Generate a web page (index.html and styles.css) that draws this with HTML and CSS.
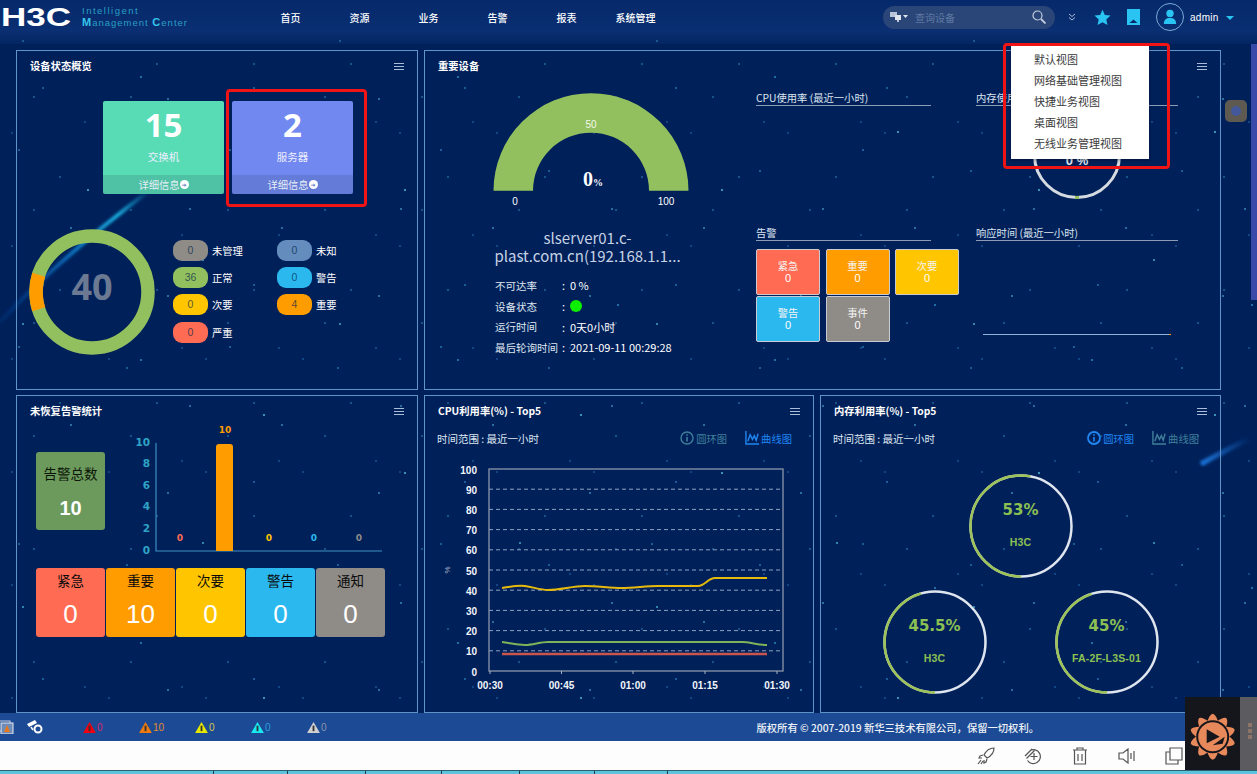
FILE: index.html
```html
<!DOCTYPE html>
<html lang="zh-CN">
<head>
<meta charset="utf-8">
<title>H3C Intelligent Management Center</title>
<link rel="stylesheet" href="styles.css">
</head>
<body>
<div class="page">
  <svg class="backdrop" viewBox="0 0 1257 774" aria-hidden="true">
    <defs>
      <linearGradient id="cometA" x1="0" y1="1" x2="1" y2="0"><stop offset="0" stop-color="#0a4fa8" stop-opacity=".2"/><stop offset=".5" stop-color="#0b78c8"/><stop offset=".8" stop-color="#18b8e8"/><stop offset="1" stop-color="#18b8e8" stop-opacity="0"/></linearGradient>
      <linearGradient id="cometB" x1="0" y1="1" x2="1" y2="0"><stop offset="0" stop-color="#1a78e0"/><stop offset="1" stop-color="#1a78e0" stop-opacity="0"/></linearGradient>
      <filter id="soft"><feGaussianBlur stdDeviation="1.4"/></filter>
    </defs>
    <path d="M0 322 Q55 262 150 190" fill="none" stroke="url(#cometA)" stroke-width="3.5" filter="url(#soft)"/>
    <path d="M1201 464 Q1222 452 1250 438" fill="none" stroke="url(#cometB)" stroke-width="5" filter="url(#soft)"/>
  </svg>

  <header class="topbar">
    <div class="brand">
      <svg class="logo" viewBox="0 0 72 20" aria-label="H3C"><text x="1" y="18" textLength="70" lengthAdjust="spacingAndGlyphs">H3C</text></svg>
      <div class="brand-name"><div>Intelligent</div><div><b>M</b>anagement <b>C</b>enter</div></div>
    </div>
    <nav class="nav">
      <a>首页</a><a>资源</a><a>业务</a><a>告警</a><a>报表</a><a>系统管理</a>
    </nav>
    <div class="search">
      <svg class="search-type" viewBox="0 0 18 12"><rect x="0" y="1" width="7" height="5" fill="#b8c4d8"/><rect x="5" y="4" width="6" height="5" fill="#dfe5ee"/><rect x="7" y="9" width="2" height="2" fill="#b8c4d8"/><path d="M13 4h5l-2.500 3z" fill="#dfe5ee"/></svg>
      <span class="search-text">查询设备</span>
      <svg class="search-icon" viewBox="0 0 14 14"><circle cx="5.500" cy="5.500" r="4.500" fill="none" stroke="#c4cfdf" stroke-width="1.200"/><path d="M9 9l4.500 4.500" stroke="#c4cfdf" stroke-width="1.800"/></svg>
    </div>
    <svg class="chev" viewBox="0 0 8 8"><path d="M1 1l3 2.500L7 1M1 4.500l3 2.500 3-2.500" fill="none" stroke="#a9bcd8" stroke-width="1"/></svg>
    <svg class="star" viewBox="0 0 18 18"><path d="M9 .8l2.500 5.600 6 .6-4.500 4 1.300 6L9 13.900 3.700 17l1.300-6-4.500-4 6-.6z" fill="#2ac4f2"/></svg>
    <svg class="mark" viewBox="0 0 13 16"><path d="M0 0h13v16H0z" fill="#2ac4f2"/><path d="M2.500 14L6.500 10.500 10.500 14z" fill="#06296b"/></svg>
    <div class="avatar"><svg viewBox="0 0 16 18"><circle cx="8" cy="5" r="4.200" fill="#2ac4f2"/><path d="M1 17c0-5 2.500-7 7-7s7 2 7 7z" fill="#2ac4f2"/></svg></div>
    <span class="user">admin</span>
    <span class="caret"></span>
  </header>

  <main class="board">
    <section class="panel">
      <div class="panel-head"><h2>设备状态概览</h2><span class="menu-icon"></span></div>
      <div class="cards">
        <div class="card card-green"><strong>15</strong><span class="card-label">交换机</span><span class="card-foot">详细信息<i class="go">➔</i></span></div>
        <div class="card card-blue"><strong>2</strong><span class="card-label">服务器</span><span class="card-foot">详细信息<i class="go">➔</i></span></div>
      </div>
      <div class="status">
        <div class="ring">
          <svg viewBox="0 0 126 126"><circle cx="63" cy="63" r="56" fill="none" stroke="#93c05e" stroke-width="13.500"/><circle cx="63" cy="63" r="56" fill="none" stroke="#ff9c00" stroke-width="13.500" pathLength="100" stroke-dasharray="10 90" stroke-dashoffset="55"/></svg>
          <span>40</span>
        </div>
        <ul class="legend">
          <li><b class="pill c-gray">0</b>未管理</li>
          <li><b class="pill c-steel">0</b>未知</li>
          <li><b class="pill c-green">36</b>正常</li>
          <li><b class="pill c-sky">0</b>警告</li>
          <li><b class="pill c-yellow">0</b>次要</li>
          <li><b class="pill c-orange">4</b>重要</li>
          <li><b class="pill c-red">0</b>严重</li>
        </ul>
      </div>
    </section>

    <section class="panel panel-wide">
      <div class="panel-head"><h2>重要设备</h2><span class="menu-icon"></span></div>
      <div class="device">
        <div class="device-left">
          <svg class="gauge" viewBox="0 0 200 118">
            <path d="M2.500 97.700a97.500 97.500 0 0 1 195 0h-39.500a58 58 0 0 0-116 0z" fill="#93c05e"/>
            <text x="100" y="35" class="g-mid">50</text>
            <text x="102" y="93" class="g-val">0<tspan class="g-pct">%</tspan></text>
            <text x="24" y="112" class="g-end">0</text>
            <text x="175" y="112" class="g-end">100</text>
          </svg>
          <div class="device-name"><span>slserver01.c-</span><span>plast.com.cn(192.168.1.1...</span></div>
          <dl class="facts">
            <div><dt>不可达率</dt><dd>:&nbsp; 0 %</dd></div>
            <div><dt>设备状态</dt><dd>:&nbsp; <i class="dot"></i></dd></div>
            <div><dt>运行时间</dt><dd>:&nbsp; 0天0小时</dd></div>
            <div><dt>最后轮询时间</dt><dd>:&nbsp; 2021-09-11 00:29:28</dd></div>
          </dl>
        </div>
        <div class="device-right">
          <div class="block"><h3>CPU使用率 (最近一小时)</h3></div>
          <div class="block">
            <h3>内存使用率 (最近一小时)</h3>
            <div class="mem-ring">
              <svg viewBox="0 0 88 88"><circle cx="44" cy="44" r="42.500" fill="none" stroke="#d6dbe2" stroke-width="3"/><path d="M42 86.500h4" stroke="#93c05e" stroke-width="3"/></svg>
              <span>0 %</span>
            </div>
          </div>
          <div class="block">
            <h3>告警</h3>
            <div class="alarm-grid">
              <div class="alarm c-red"><span>紧急</span><span>0</span></div>
              <div class="alarm c-orange"><span>重要</span><span>0</span></div>
              <div class="alarm c-yellow"><span>次要</span><span>0</span></div>
              <div class="alarm c-sky"><span>警告</span><span>0</span></div>
              <div class="alarm c-gray"><span>事件</span><span>0</span></div>
            </div>
          </div>
          <div class="block">
            <h3>响应时间 (最近一小时)</h3>
            <div class="resp-line"></div>
          </div>
        </div>
      </div>
    </section>

    <section class="panel">
      <div class="panel-head"><h2>未恢复告警统计</h2><span class="menu-icon"></span></div>
      <div class="alarm-top">
        <div class="total"><span>告警总数</span><strong>10</strong></div>
        <svg class="bars" viewBox="0 0 260 130">
          <g class="y-labels">
            <text x="20" y="20">10</text><text x="20" y="41">8</text><text x="20" y="63">6</text><text x="20" y="84">4</text><text x="20" y="106">2</text><text x="20" y="128">0</text>
          </g>
          <path d="M26 17V125H252" fill="none" stroke="#3d8fc0" stroke-width="1.200"/>
          <path d="M86 125V21a3 3 0 0 1 3-3h11a3 3 0 0 1 3 3v104z" fill="#ff9c00"/>
          <g class="bar-labels">
            <text x="50" y="115" fill="#ff6c53">0</text>
            <text x="95" y="7" fill="#ff9c00">10</text>
            <text x="139" y="115" fill="#ffc600">0</text>
            <text x="184" y="115" fill="#2bb8ee">0</text>
            <text x="229" y="115" fill="#8f8c88">0</text>
          </g>
        </svg>
      </div>
      <div class="tiles">
        <div class="tile c-red"><span>紧急</span><strong>0</strong></div>
        <div class="tile c-orange"><span>重要</span><strong>10</strong></div>
        <div class="tile c-yellow"><span>次要</span><strong>0</strong></div>
        <div class="tile c-sky"><span>警告</span><strong>0</strong></div>
        <div class="tile c-gray"><span>通知</span><strong>0</strong></div>
      </div>
    </section>

    <section class="panel">
      <div class="panel-head"><h2>CPU利用率(%) - Top5</h2><span class="menu-icon"></span></div>
      <div class="toolbar">
        <span>时间范围 : 最近一小时</span>
        <div class="toggles">
          <span class="toggle"><svg viewBox="0 0 14 14"><circle cx="7" cy="7" r="6" fill="none" stroke="currentColor" stroke-width="1.400"/><path d="M7 6v4.500M7 3.200v1.500" stroke="currentColor" stroke-width="1.600"/></svg>圆环图</span>
          <span class="toggle is-on"><svg viewBox="0 0 15 15"><path d="M1 0v14h14" fill="none" stroke="currentColor" stroke-width="1.500"/><path d="M3 11l2.500-7 2.500 5 2-4 2 5 2-7" fill="none" stroke="currentColor" stroke-width="1.500"/></svg>曲线图</span>
        </div>
      </div>
      <svg class="cpu" viewBox="0 0 388 250">
        <g class="grid-lines">
          <path d="M64 39.200h294M64 59.400h294M64 79.600h294M64 99.800h294M64 120h294M64 140.200h294M64 160.400h294M64 180.600h294M64 200.800h294"/>
        </g>
        <rect x="64" y="19" width="294" height="202" fill="none" stroke="#8c96aa" stroke-width="1.300"/>
        <path d="M65 221v3M136.500 221v3M208 221v3M280 221v3M352 221v3" stroke="#a8b2c4"/>
        <g class="cpu-y">
          <text x="52" y="24">100</text><text x="52" y="44">90</text><text x="52" y="64">80</text><text x="52" y="84">70</text><text x="52" y="104">60</text><text x="52" y="125">50</text><text x="52" y="145">40</text><text x="52" y="165">30</text><text x="52" y="185">20</text><text x="52" y="205">10</text><text x="52" y="226">0</text>
        </g>
        <g class="cpu-x">
          <text x="65" y="239">00:30</text><text x="136.500" y="239">00:45</text><text x="208" y="239">01:00</text><text x="280" y="239">01:15</text><text x="352" y="239">01:30</text>
        </g>
        <text class="cpu-unit" transform="translate(25 120) rotate(-90)">%</text>
        <path d="M77 138C85 137 92 135 100 136C108 137 115 140 123 140C136 140 147 136 160 136C172 136 185 138 197 138C209 138 221 136 233 136L273 136C280 136 283 128 290 128L342 128" fill="none" stroke="#e6ba0c" stroke-width="2"/>
        <path d="M77 192C85 193 92 195 100 195C108 195 115 192 123 192L317 192C325 192 333 195 342 195" fill="none" stroke="#7fb35a" stroke-width="2"/>
        <path d="M77 204H342" stroke="#c8564f" stroke-width="2.500"/>
      </svg>
    </section>

    <section class="panel">
      <div class="panel-head"><h2>内存利用率(%) - Top5</h2><span class="menu-icon"></span></div>
      <div class="toolbar">
        <span>时间范围 : 最近一小时</span>
        <div class="toggles">
          <span class="toggle is-on"><svg viewBox="0 0 14 14"><circle cx="7" cy="7" r="6" fill="none" stroke="currentColor" stroke-width="1.800"/><path d="M7 6v4.500M7 3.200v1.500" stroke="currentColor" stroke-width="1.600"/></svg>圆环图</span>
          <span class="toggle"><svg viewBox="0 0 15 15"><path d="M1 0v14h14" fill="none" stroke="currentColor" stroke-width="1.500"/><path d="M3 11l2.500-7 2.500 5 2-4 2 5 2-7" fill="none" stroke="currentColor" stroke-width="1.500"/></svg>曲线图</span>
        </div>
      </div>
      <div class="donuts">
        <div class="donut-row">
          <div class="donut"><svg viewBox="0 0 104 104"><circle class="d-bg" cx="52" cy="52" r="50.500"/><circle class="d-fg" cx="52" cy="52" r="50.500" pathLength="100" stroke-dasharray="53 47"/></svg><strong>53%</strong><span>H3C</span></div>
        </div>
        <div class="donut-row donut-row-wide">
          <div class="donut"><svg viewBox="0 0 104 104"><circle class="d-bg" cx="52" cy="52" r="50.500"/><circle class="d-fg" cx="52" cy="52" r="50.500" pathLength="100" stroke-dasharray="45.500 54.500"/></svg><strong>45.5%</strong><span>H3C</span></div>
          <div class="donut"><svg viewBox="0 0 104 104"><circle class="d-bg" cx="52" cy="52" r="50.500"/><circle class="d-fg" cx="52" cy="52" r="50.500" pathLength="100" stroke-dasharray="45 55"/></svg><strong>45%</strong><span>FA-2F-L3S-01</span></div>
        </div>
      </div>
    </section>
  </main>

  <footer class="statusbar">
    <svg class="sb-stack" viewBox="0 0 14 14"><rect x="-2" y="1" width="12" height="10" fill="none" stroke="#c9d4e6"/><rect x="1" y="3" width="12" height="11" fill="#6f8cb8" stroke="#e4e9f2"/><path d="M7 5l3 7H4z" fill="#e9781c"/></svg>
    <svg class="sb-cam" viewBox="0 0 16 14"><path d="M0 4l8-4 2 3-8 4z" fill="#fff"/><circle cx="11" cy="9" r="3.500" fill="none" stroke="#fff" stroke-width="2"/><path d="M4 7l2 3" stroke="#fff" stroke-width="1.500"/></svg>
    <div class="sb-alarms">
      <span class="sb-alarm a-red"><svg viewBox="0 0 14 12"><path d="M7 0l7 12H0z" fill="currentColor"/><path d="M7 4v6" stroke="#333" stroke-width="2"/></svg>0</span>
      <span class="sb-alarm a-orange"><svg viewBox="0 0 14 12"><path d="M7 0l7 12H0z" fill="currentColor"/><path d="M7 4v6" stroke="#333" stroke-width="2"/></svg>10</span>
      <span class="sb-alarm a-yellow"><svg viewBox="0 0 14 12"><path d="M7 0l7 12H0z" fill="currentColor"/><path d="M7 4v6" stroke="#333" stroke-width="2"/></svg>0</span>
      <span class="sb-alarm a-cyan"><svg viewBox="0 0 14 12"><path d="M7 0l7 12H0z" fill="currentColor"/><path d="M7 4v6" stroke="#333" stroke-width="2"/></svg>0</span>
      <span class="sb-alarm a-gray"><svg viewBox="0 0 14 12"><path d="M7 0l7 12H0z" fill="currentColor"/><path d="M7 4v6" stroke="#333" stroke-width="2"/></svg>0</span>
    </div>
    <span class="copyright">版权所有 © 2007-2019 新华三技术有限公司，保留一切权利。</span>
  </footer>

  <div class="toolstrip">
    <svg viewBox="0 0 18 18"><path d="M17 1c-5 0-8 3-10 7l3 3c4-2 7-5 7-10zM6 8l-3 1-1 2 3 0M10 12l-1 3-2 1 0-3M4 13l-3 4M6 14l-2 3" fill="none" stroke="#555" stroke-width="1.200"/></svg>
    <svg viewBox="0 0 18 18"><path d="M6 3.500A7 7 0 1 1 3.500 13.500M10 6v7M6.500 9.500h7M1 9l7-7M2.500 11.500l8-8" fill="none" stroke="#555" stroke-width="1.200"/></svg>
    <svg viewBox="0 0 18 18"><path d="M2 3h14M6 3V1h6v2M3.500 3v14h11V3M7 7v7M11 7v7" fill="none" stroke="#555" stroke-width="1.200"/></svg>
    <svg viewBox="0 0 18 18"><path d="M1 6h4l5-4v14l-5-4H1zM13 6v6M16 4v10" fill="none" stroke="#555" stroke-width="1.200"/></svg>
    <svg viewBox="0 0 18 18"><path d="M5 1h12v12H5zM5 5H1v12h12v-4" fill="none" stroke="#555" stroke-width="1.200"/></svg>
  </div>
  <div class="edge"></div>

  <div class="scroll-thumb"></div>
  <div class="float-btn"><i></i></div>

  <div class="views">
    <a>默认视图</a><a>网络基础管理视图</a><a>快捷业务视图</a><a>桌面视图</a><a>无线业务管理视图</a>
  </div>
  <div class="mark-box mark-cards"></div>
  <div class="mark-box mark-views"></div>

  <aside class="player">
    <svg viewBox="0 0 55 73">
      <g transform="translate(27.700 39.700)" fill="#e8895c">
        <path id="petal" d="M-5.500 -15Q-3 -22.500 0 -23Q3 -22.500 5.500 -15z"/>
        <use href="#petal" transform="rotate(36)"/><use href="#petal" transform="rotate(72)"/><use href="#petal" transform="rotate(108)"/><use href="#petal" transform="rotate(144)"/><use href="#petal" transform="rotate(180)"/><use href="#petal" transform="rotate(216)"/><use href="#petal" transform="rotate(252)"/><use href="#petal" transform="rotate(288)"/><use href="#petal" transform="rotate(324)"/>
        <circle r="16.500" fill="#15161c"/>
        <circle r="14.500"/>
        <path d="M-6 -7.500L7 0L-6 6.500z" fill="#15161c"/><path d="M0 8.500L12 0L10 7z" fill="#15161c"/>
      </g>
    </svg>
    <div class="player-side"><i></i><i></i><i></i></div>
  </aside>
</div>
</body>
</html>
```

FILE: styles.css
```css
* { box-sizing: border-box; }
html, body { margin: 0; padding: 0; height: 100%; overflow: hidden; }
body { font-family: "Noto Sans CJK SC", "Noto Sans", sans-serif; color: #fff; font-size: 10.5px; }
h2, h3, ul, dl, dd { margin: 0; padding: 0; }

.page {
  position: relative;
  width: 1257px;
  height: 774px;
  overflow: hidden;
  background-color: #00205a;
  background-image:
    radial-gradient(circle at 23px 41px, #2f86ad .7px, transparent 1.3px),
    radial-gradient(circle at 88px 190px, #3a93b8 .7px, transparent 1.3px),
    radial-gradient(circle at 141px 77px, #1f6ea6 .9px, transparent 1.5px),
    radial-gradient(circle at 203px 260px, #2f86ad .7px, transparent 1.3px),
    radial-gradient(circle at 264px 132px, #3a93b8 .7px, transparent 1.3px),
    radial-gradient(circle at 301px 22px, #1f6ea6 .9px, transparent 1.5px),
    radial-gradient(circle at 19px 150px, #1c5c98 .7px, transparent 1.2px),
    radial-gradient(circle at 71px 31px, #2a6ea0 .7px, transparent 1.2px),
    radial-gradient(circle at 127px 171px, #1c5c98 .7px, transparent 1.2px),
    radial-gradient(circle at 168px 99px, #2a6ea0 .7px, transparent 1.2px),
    radial-gradient(circle at 43px 88px, #1c5c98 .7px, transparent 1.2px),
    radial-gradient(circle at 190px 12px, #2a6ea0 .7px, transparent 1.2px),
    radial-gradient(circle at 12px 20px, #174f8c .6px, transparent 1.1px),
    radial-gradient(circle at 60px 64px, #1c6092 .6px, transparent 1.1px),
    radial-gradient(circle at 85px 9px, #174f8c .6px, transparent 1.1px),
    radial-gradient(circle at 34px 97px, #1c6092 .6px, transparent 1.1px);
  background-size:
    317px 283px, 317px 283px, 317px 283px, 317px 283px, 317px 283px, 317px 283px,
    211px 197px, 211px 197px, 211px 197px, 211px 197px, 211px 197px, 211px 197px,
    97px 113px, 97px 113px, 97px 113px, 97px 113px;
}
.backdrop { position: absolute; inset: 0; width: 1257px; height: 774px; }

/* top bar */
.topbar {
  position: relative;
  display: flex;
  align-items: center;
  height: 44px;
  padding-bottom: 10px;
  background: linear-gradient(#05296a, #0a2f72 70%, rgba(10, 47, 114, .35));
}
.brand { display: flex; align-items: center; width: 255px; flex: none; }
.logo { width: 72px; height: 20px; margin-top: 1px; flex: none; overflow: visible; }
.logo text { font: 700 25px "Liberation Sans", sans-serif; fill: #fff; }
.brand-name { margin-left: 10px; font: 9.500px/10.500px "Liberation Sans", sans-serif; letter-spacing: 1px; color: #2a9fc4; white-space: nowrap; }
.brand-name div:first-child { letter-spacing: 1.500px; }
.brand-name b { color: #35c4ea; font-size: 11px; }
.nav { display: flex; width: 414px; flex: none; margin-left: 1px; }
.nav a { width: 69px; text-align: center; font-size: 10px; font-weight: 500; white-space: nowrap; }
.search {
  display: flex;
  align-items: center;
  width: 172px;
  height: 23px;
  margin-left: 213px;
  padding: 0 9px 0 7px;
  border-radius: 12px;
  background: #2a4578;
  flex: none;
}
.search-type { width: 18px; height: 12px; flex: none; }
.search-text { margin-left: 7px; color: #5f7aa3; font-size: 10px; }
.search-icon { width: 14px; height: 14px; margin-left: auto; }
.chev { width: 8px; height: 8px; margin-left: 13px; flex: none; }
.star { width: 17px; height: 17px; margin-left: 18px; flex: none; }
.mark { width: 13px; height: 16px; margin-left: 16px; flex: none; }
.avatar {
  display: flex;
  align-items: center;
  justify-content: center;
  width: 28px;
  height: 28px;
  margin-left: 16px;
  border: 1px solid #7aa9d6;
  border-radius: 50%;
  flex: none;
}
.avatar svg { width: 14px; height: 16px; }
.user { margin-left: 6px; font: 10px "Liberation Sans", sans-serif; letter-spacing: .3px; }
.caret { width: 0; height: 0; margin-left: 7px; margin-top: 2px; border: 4px solid transparent; border-top-color: #2ac4f2; border-bottom: 0; }

/* panels */
.board {
  position: relative;
  display: grid;
  grid-template-columns: 402px 390px 401px;
  grid-template-rows: 340px 318px;
  gap: 5px 6px;
  height: 669px;
  padding: 6px 0 0 16px;
  overflow: hidden;
}
.panel { border: 1px solid #5f94c8; min-width: 0; }
.panel-wide { grid-column: 2 / 4; }
.panel-head { display: flex; align-items: center; justify-content: space-between; height: 30px; padding: 0 13px; }
.panel-head h2 { font-size: 10.300px; font-weight: 700; line-height: 30px; white-space: nowrap; }
.menu-icon { width: 10px; height: 7px; border-top: 1px solid #a9bcd8; border-bottom: 1px solid #a9bcd8; position: relative; }
.menu-icon::after { content: ""; display: block; height: 1px; margin-top: 2px; background: #a9bcd8; }

/* device overview */
.cards { display: flex; gap: 8px; margin-top: 20px; padding-left: 86px; }
.card { display: flex; flex-direction: column; align-items: center; width: 121px; height: 93px; border-radius: 2px; overflow: hidden; }
.card-green { background: #58dcb6; }
.card-blue { background: #7088f0; }
.card strong { font: 700 33px/38px "Open Sans", sans-serif; margin-top: 5px; }
.card-label { font-size: 10.500px; line-height: 14px; margin-top: 6px; color: #eef; }
.card-foot { display: flex; align-items: center; justify-content: center; width: 100%; height: 19px; margin-top: auto; background: rgba(40, 60, 90, .16); color: #e8eef6; font-size: 10.300px; }
.go { display: inline-flex; align-items: center; justify-content: center; width: 9px; height: 9px; border-radius: 50%; background: #fff; color: #5a78c0; font: 6px/9px "DejaVu Sans", sans-serif; font-style: normal; }

.status { display: flex; margin-top: 35px; padding-left: 12px; }
.ring { position: relative; display: flex; align-items: center; justify-content: center; width: 126px; height: 126px; padding-bottom: 11px; flex: none; }
.ring svg { position: absolute; inset: 0; }
.ring span { position: relative; font: 700 36px "Open Sans", sans-serif; color: #6b7a92; }
.legend { display: grid; grid-template-columns: 104px 104px; grid-auto-rows: 27.400px; margin: 10.500px 0 0 18px; list-style: none; }
.legend li { display: flex; align-items: flex-start; font-size: 10.300px; line-height: 21px; }
.pill { display: block; width: 35px; height: 21px; margin-right: 4px; border-radius: 9px; text-align: center; font: 400 10.500px/21px "Liberation Sans", sans-serif; color: rgba(0, 30, 70, .7); }

.c-gray { background: #8f8c88; }
.c-steel { background: #648dbe; }
.c-green { background: #93c05e; }
.c-sky { background: #2bb8ee; }
.c-yellow { background: #ffc600; }
.c-orange { background: #ff9c00; }
.c-red { background: #ff6c53; }

/* key device */
.device { display: flex; }
.device-left { width: 331px; flex: none; display: flex; flex-direction: column; align-items: center; }
.gauge { width: 200px; height: 118px; margin-top: 12px; flex: none; }
.g-mid { font: 10px "Liberation Sans", sans-serif; fill: #f2f6ea; text-anchor: middle; }
.g-end { font: 10px "Liberation Sans", sans-serif; fill: #fff; text-anchor: middle; }
.g-val { font: 700 20px "Liberation Serif", serif; fill: #fff; text-anchor: middle; }
.g-pct { font-size: 10px; }
.device-name { display: flex; flex-direction: column; align-items: center; margin: 18px 6px 0 0; font-size: 15px; line-height: 18px; color: #c6d2e4; white-space: nowrap; }
.facts { align-self: flex-start; margin: 10px 0 0 70px; }
.facts div { display: flex; height: 20.700px; align-items: center; }
.facts dt { width: 67px; color: #dfe6f0; }
.facts dd { display: flex; align-items: center; white-space: pre; font-size: 11px; }
.dot { width: 12px; height: 12px; border-radius: 50%; background: #0cf000; display: inline-block; }
.device-right { display: grid; grid-template-columns: 175px 202px; grid-template-rows: 135px 135px; column-gap: 45px; margin-top: 10px; }
.block { min-width: 0; }
.block h3 { height: 14px; font-size: 10.300px; font-weight: 400; line-height: 13px; color: #dde5f0; border-bottom: 1px solid #8d9bb5; white-space: nowrap; box-sizing: content-box; }
.mem-ring { position: relative; display: flex; justify-content: center; width: 88px; height: 88px; margin: 5px 0 0 57px; }
.mem-ring svg { position: absolute; inset: 0; }
.mem-ring span { margin-top: 42px; font: 700 13px "Liberation Sans", sans-serif; color: #dfe6f0; }
.alarm-grid { display: grid; grid-template-columns: 64px 64px 64px; gap: 1px 5.500px; margin-top: 8px; }
.alarm { display: flex; flex-direction: column; align-items: center; justify-content: center; height: 46px; padding-top: 1px; border: 1px solid #c8ccd2; border-radius: 2px; line-height: 12px; color: #f4f4f4; font-size: 10.300px; }
.alarm span + span { font: 11px/13px "Liberation Sans", sans-serif; color: #fff; }
.resp-line { position: relative; width: 188px; height: 1px; margin: 93px 0 0 7px; background: #8fb3d9; }
.resp-line::after { content: ""; position: absolute; right: 0; top: 0; width: 2px; height: 1px; background: #ff9c00; }

/* alarms */
.alarm-top { display: flex; padding-left: 19px; }
.total { display: flex; flex-direction: column; align-items: center; width: 69px; height: 78px; margin-top: 26px; border-radius: 3px; background: #6b9a5c; }
.total span { margin-top: 11px; color: #0b1608; font-size: 13.500px; line-height: 20px; white-space: nowrap; }
.total strong { margin-top: 13px; font: 700 20px/24px "Liberation Sans", sans-serif; }
.bars { width: 260px; height: 130px; margin-left: 25px; flex: none; }
.y-labels text { font: 700 10.500px "DejaVu Sans", sans-serif; fill: #2fa4c6; text-anchor: end; }
.bar-labels text { font: 700 9px "DejaVu Sans", sans-serif; text-anchor: middle; }
.tiles { display: flex; gap: 1px; margin-top: 12px; padding-left: 19px; }
.tile { display: flex; flex-direction: column; align-items: center; width: 69px; height: 69px; border-radius: 3px; }
.tile span { margin-top: 2px; color: #0a0a0a; font-size: 13.500px; line-height: 20px; }
.tile strong { margin-top: 9px; font: 400 26px/30px "Liberation Sans", sans-serif; }

.toolbar { display: flex; align-items: center; justify-content: space-between; height: 14px; margin-top: 5px; padding: 0 21px 0 12px; color: #dfe6f0; }
.toggles { display: flex; gap: 18px; }
.toggle { display: flex; align-items: center; gap: 2px; font-size: 10.300px; color: #3f7f99; white-space: nowrap; }
.toggle svg { width: 14px; height: 14px; }
.is-on { color: #1f86f2; }

.cpu { display: block; width: 388px; height: 250px; margin-top: 5px; }
.grid-lines path { fill: none; stroke: #8ea1c2; stroke-width: 1; stroke-dasharray: 4 3; }
.cpu-y text { font: 700 10px "Liberation Sans", sans-serif; fill: #f2f5fa; text-anchor: end; }
.cpu-x text { font: 700 10px "Liberation Sans", sans-serif; fill: #f2f5fa; text-anchor: middle; }
.cpu-unit { font: 8px "Liberation Sans", sans-serif; fill: #a8b4c8; text-anchor: middle; }

.donuts { display: flex; flex-direction: column; align-items: center; gap: 12px; margin-top: 29px; }
.donut-row { display: flex; }
.donut-row-wide { gap: 68px; }
.donut { position: relative; display: flex; flex-direction: column; align-items: center; width: 104px; height: 104px; color: #8cc152; }
.donut svg { position: absolute; inset: 0; }
.d-bg, .d-fg { fill: none; stroke-width: 2.500; }
.d-bg { stroke: #dfe5ee; }
.d-fg { stroke: #9cc258; transform: rotate(90deg); transform-origin: 52px 52px; }
.donut strong { margin-top: 25px; font: 700 15px/22px "DejaVu Sans", sans-serif; white-space: nowrap; }
.donut span { margin-top: 14px; font: 700 10.500px/14px "Liberation Sans", sans-serif; letter-spacing: .15px; white-space: nowrap; }

/* footer */
.statusbar { position: relative; display: flex; align-items: center; height: 28px; background: #1c4a94; }
.sb-stack { width: 14px; height: 14px; flex: none; }
.sb-cam { width: 16px; height: 14px; margin-left: 13px; flex: none; }
.sb-alarms { display: flex; margin-left: 40px; }
.sb-alarm { display: flex; align-items: center; width: 56px; font: 10px "Liberation Sans", sans-serif; }
.sb-alarm svg { width: 13px; height: 11px; margin-right: 1px; }
.a-red { color: #d8286a; }
.a-red svg { color: #f00010; }
.a-orange { color: #e88a30; }
.a-orange svg { color: #ef7a10; }
.a-yellow { color: #d8c84a; }
.a-yellow svg { color: #e6e800; }
.a-cyan { color: #2aa0e0; }
.a-cyan svg { color: #18e8f0; }
.a-gray { color: #8a94a8; }
.a-gray svg { color: #d0d0d0; }
.copyright { margin-left: auto; margin-right: 218px; font-size: 10.300px; font-weight: 500; color: #eef2f8; white-space: nowrap; }

.toolstrip { position: relative; display: flex; align-items: center; justify-content: flex-end; gap: 29px; height: 29px; padding-right: 74px; background: #fdfdfd; }
.toolstrip svg { width: 18px; height: 18px; }
.edge {
  position: relative;
  height: 4px;
  border-top: 1px solid #2a6070;
  background-color: #5ec3dd;
  background-image:
    linear-gradient(#1d3a48, #1d3a48), linear-gradient(#1d3a48, #1d3a48), linear-gradient(#1d3a48, #1d3a48),
    linear-gradient(#1d3a48, #1d3a48), linear-gradient(#1d3a48, #1d3a48), linear-gradient(#1d3a48, #1d3a48),
    linear-gradient(#1d3a48, #1d3a48);
  background-size: 1px 100%;
  background-repeat: no-repeat;
  background-position: 213px 0, 287px 0, 365px 0, 441px 0, 519px 0, 594px 0, 667px 0;
}

/* overlays */
.scroll-thumb { position: absolute; right: 0; top: 44px; width: 6px; height: 256px; background: #3a4aa8; }
.float-btn { position: absolute; left: 1225px; top: 100px; display: flex; align-items: center; justify-content: center; width: 22px; height: 22px; border-radius: 5px; background: #5e5a52; }
.float-btn i { width: 10px; height: 10px; border-radius: 50%; background: #42589a; }
.views { position: absolute; left: 1011px; top: 46px; display: flex; flex-direction: column; width: 138px; height: 113px; padding: 3px 0 0 23px; background: #fff; box-shadow: 0 1px 3px rgba(0, 0, 0, .4); }
.views a { font-size: 11px; line-height: 21px; color: #3a3a3a; white-space: nowrap; }
.mark-box { position: absolute; border: 3px solid #f01414; border-radius: 4px; }
.mark-cards { left: 226px; top: 89px; width: 141px; height: 118px; }
.mark-views { left: 1003px; top: 43px; width: 167px; height: 126px; }
.player { position: absolute; left: 1185px; top: 697px; display: flex; width: 72px; height: 73px; }
.player svg { display: block; width: 55px; height: 73px; background: #15161c; flex: none; }
.player-side { display: flex; flex-direction: column; align-items: flex-end; justify-content: center; gap: 2px; flex: 1; padding: 0 5px 6px 0; background: #5c5c60; }
.player-side i { width: 4px; height: 4px; background: #8d7468; }
```
